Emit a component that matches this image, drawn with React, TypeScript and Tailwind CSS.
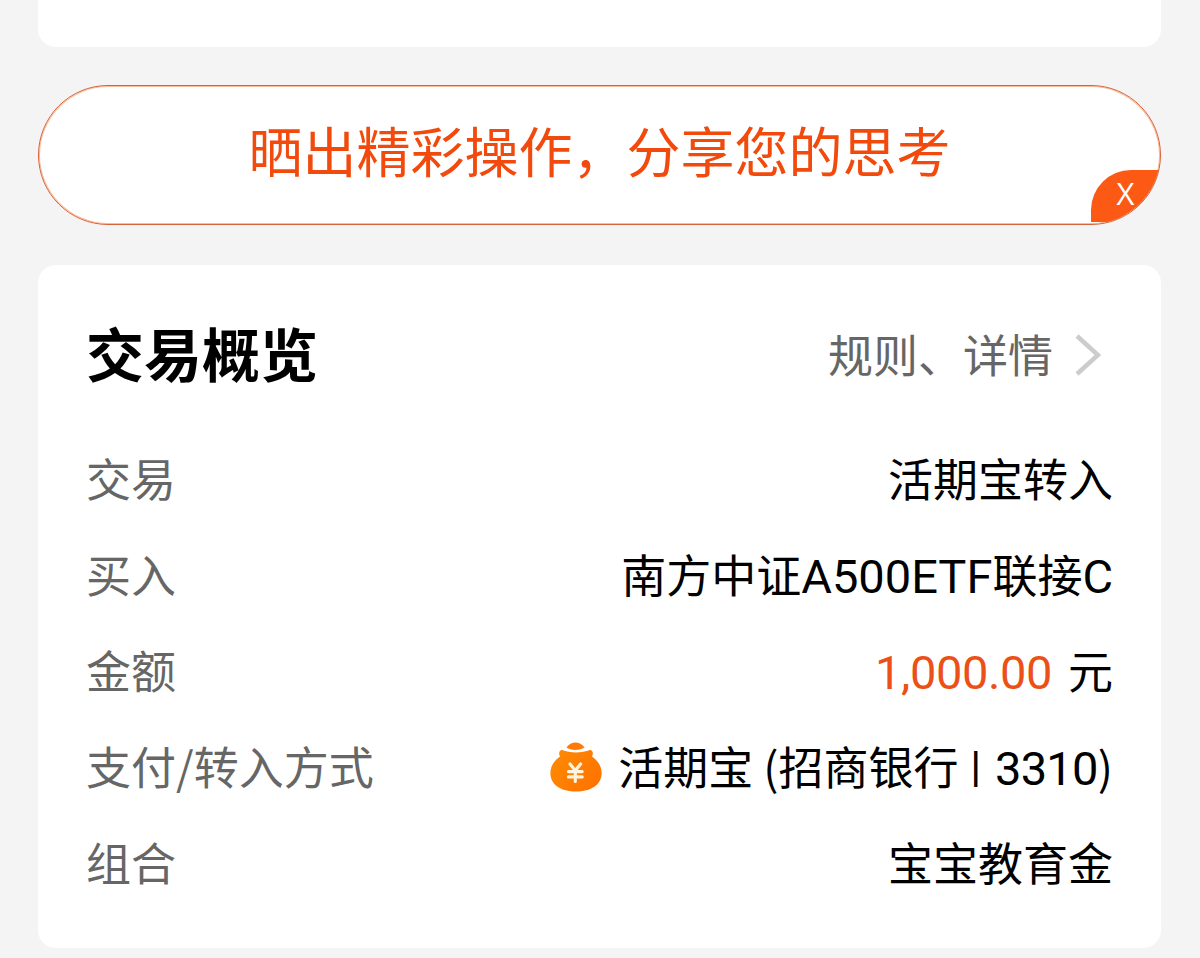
import type { ReactNode } from "react";

interface RowProps {
  label: string;
  children: ReactNode;
}

const Row = ({ label, children }: RowProps) => {
  return (
    <div className="flex h-24 items-center justify-between pb-[8px] whitespace-nowrap">
      <span className="text-[#666666]">{label}</span>
      <div className="flex items-center text-black">{children}</div>
    </div>
  );
};

const MoneyBag = () => {
  return (
    <svg width="52" height="50" viewBox="0 0 52 50" className="mt-[4px] mr-4">
      <defs>
        <linearGradient id="bag" x1="0" y1="0.2" x2="1" y2="0.8">
          <stop offset="0" stopColor="#ff8a00" />
          <stop offset="1" stopColor="#ff7200" />
        </linearGradient>
      </defs>
      <path d="M16.500 5.500C19 2 22 .5 25.500.5S32 2 34.500 5.500C30 8.800 21 8.800 16.500 5.500Z" fill="#ff7a0a" />
      <path
        d="M11.500 7.800C9 9 8.500 11.500 10 14.500C4 18.500.4 24.500.4 31C.4 43 11 49.500 26 49.500S51.600 43 51.600 31C51.600 24.500 48 18.500 42 14.500C43.500 11.500 43 9 40.500 7.800C31 11.300 21 11.300 11.500 7.800Z"
        fill="url(#bag)"
      />
      <path
        d="M20 22L25.300 28.500L30.600 22M18.500 29.600H32.200M18.500 34.900H32.200M25.300 28.500V39.500"
        fill="none"
        stroke="#fff5df"
        strokeWidth="3.1"
        strokeLinecap="round"
      />
    </svg>
  );
};

const App = () => {
  return (
    <div className="h-[958px] w-[1200px] overflow-hidden bg-[#f4f4f4] pr-[39px] pl-[38px] font-['Noto_Sans_CJK_SC',sans-serif]">
      <div className="h-[47px] rounded-b-[18px] bg-white" />

      <div className="relative mt-[38px] flex h-[140px] items-center justify-center overflow-hidden rounded-full border border-[#d8623a] bg-white shadow-[inset_0_0_0_1px_#f9bd98]">
        <span className="-mt-[11px] text-[54px] leading-none whitespace-nowrap text-[#f24a0c]">
          晒出精彩操作，分享您的思考
        </span>
        <button className="absolute right-0 bottom-[2px] h-[52px] w-[69px] rounded-tl-[40px] bg-[#fc5a14] text-center font-['Open_Sans',sans-serif] text-[31px] text-white">
          <span className="-mt-[1px] block h-full leading-[46px]">X</span>
        </button>
      </div>

      <div className="mt-10 h-[683px] rounded-[18px] bg-white pr-[48px] pl-[48px] text-[45px] leading-none">
        <div className="flex h-[168px] items-center justify-between pt-[8px] whitespace-nowrap">
          <h2 className="-mt-[2px] text-[58px] font-bold text-black">交易概览</h2>
          <div className="flex items-center text-[#666666]">
            <span>规则、详情</span>
            <svg width="26" height="42" viewBox="0 0 26 42" className="mt-[4px] mr-[12px] ml-[22px]">
              <path d="M2 2L23 21L2 40" fill="none" stroke="#cccccc" strokeWidth="4.500" />
            </svg>
          </div>
        </div>

        <Row label="交易">活期宝转入</Row>
        <Row label="买入">
          南方中证<span className="mt-[6px] font-[Roboto] text-[47px]">A500ETF</span>联接
          <span className="mt-[6px] font-[Roboto] text-[47px]">C</span>
        </Row>
        <Row label="金额">
          <span className="mt-[6px] mr-4 font-[Roboto] text-[47px] tracking-[-0.4px] text-[#ec5018]">1,000.00</span>元
        </Row>
        <Row label="支付/转入方式">
          <MoneyBag />
          <span>活期宝 (招商银行</span>
          <span className="mt-[3px] mr-[14px] ml-[12px] font-[Roboto] text-[42px] font-medium">|</span>
          <span className="mt-[6px] font-[Roboto] text-[47px] tracking-[-0.7px]">3310</span>
          <span>)</span>
        </Row>
        <Row label="组合">宝宝教育金</Row>
      </div>
    </div>
  );
};

export default App;
